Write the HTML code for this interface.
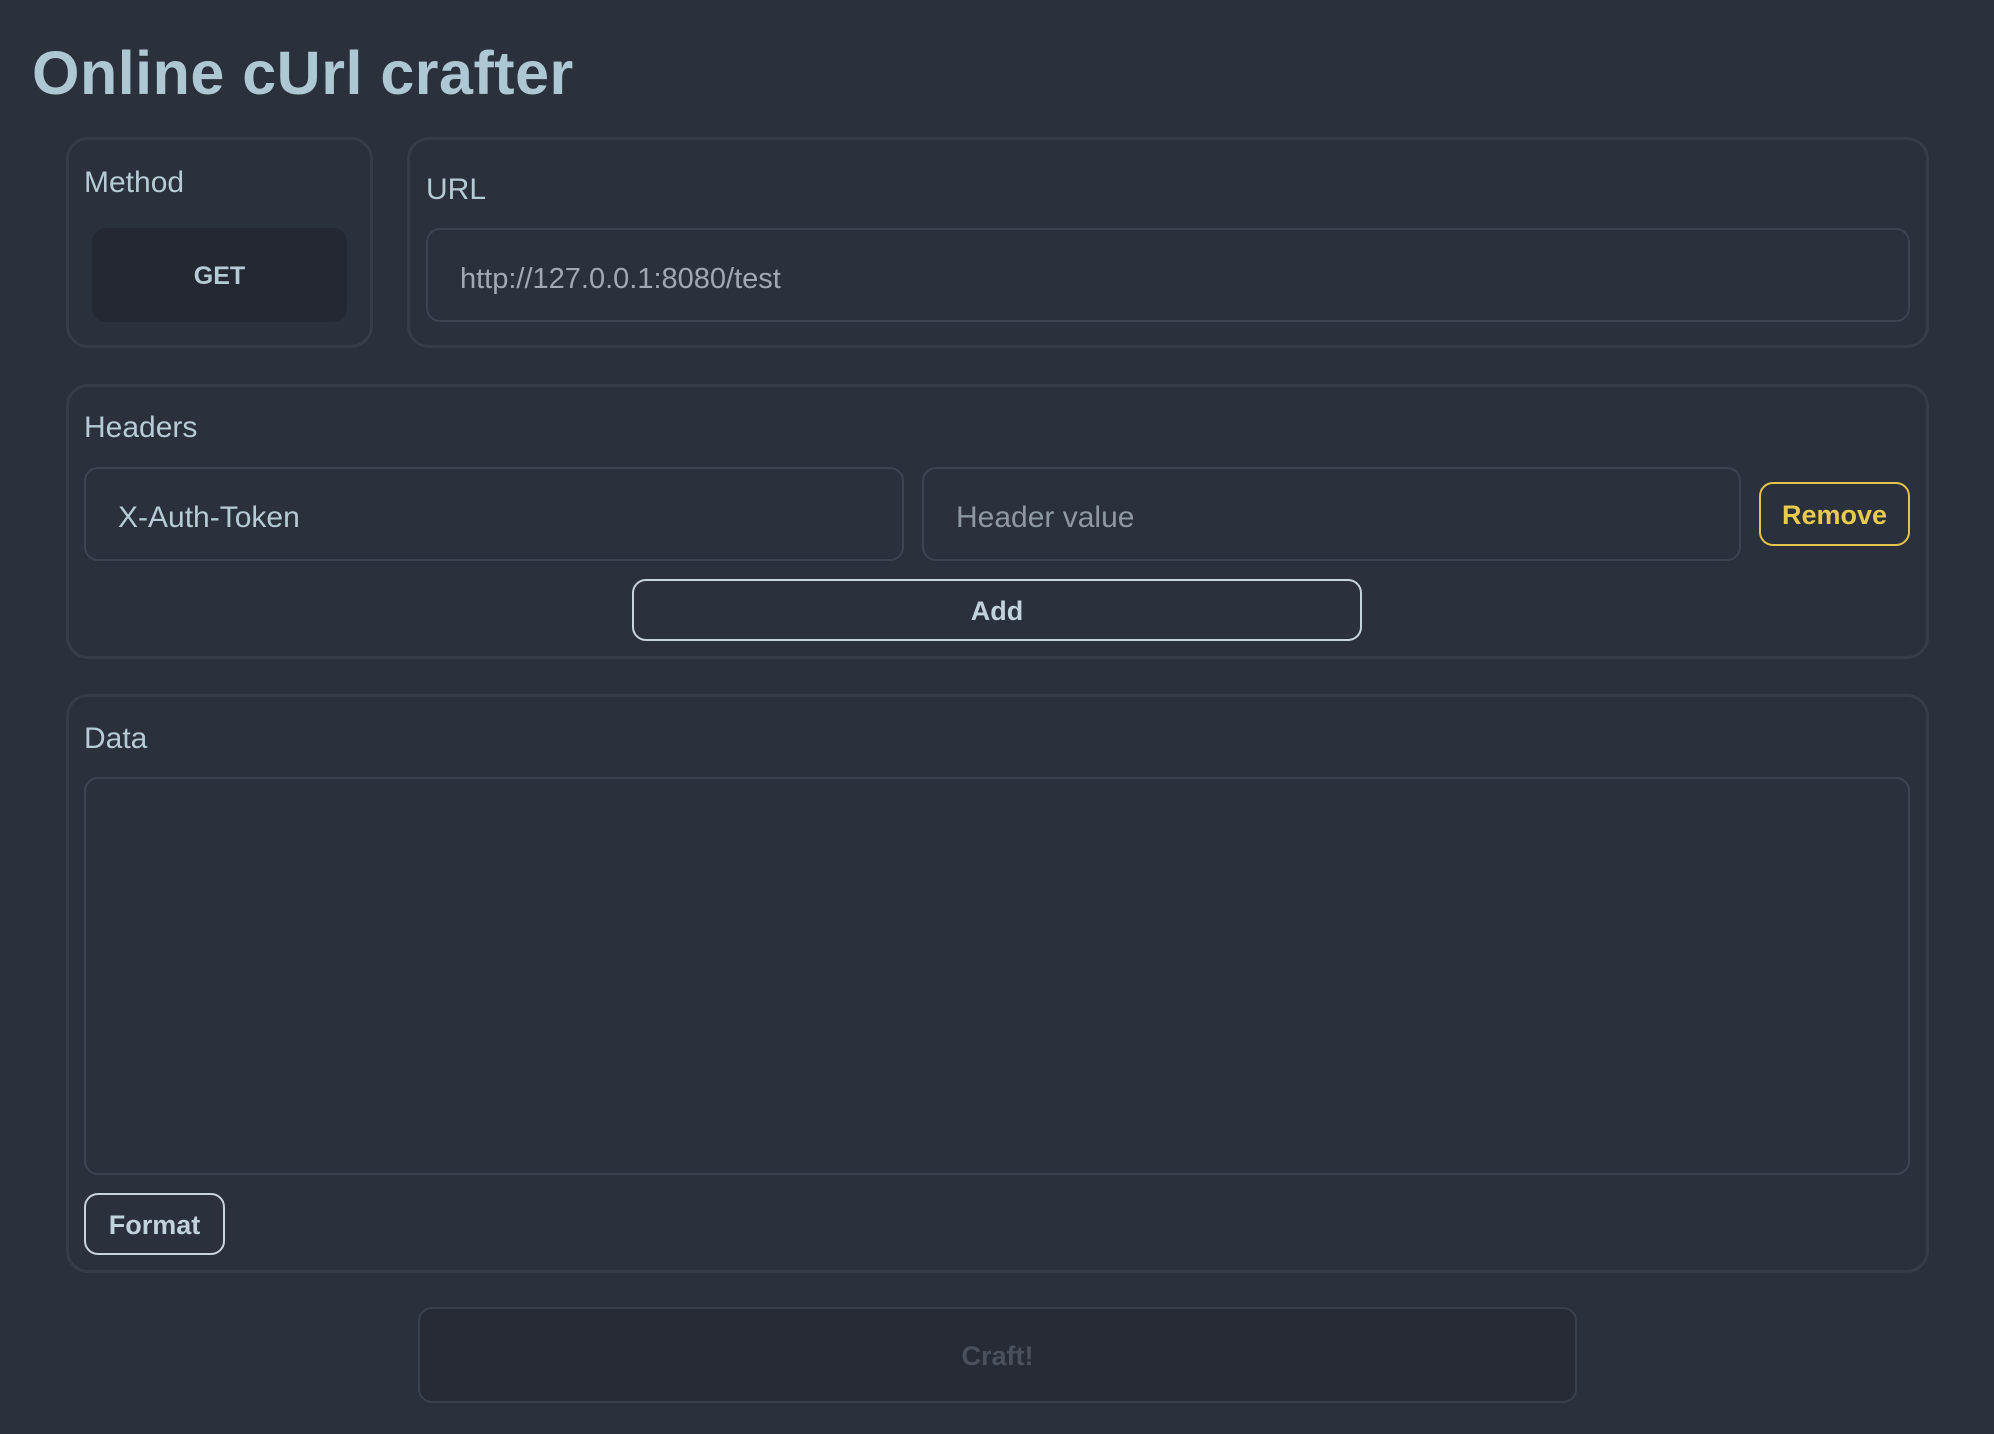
<!DOCTYPE html>
<html><head><meta charset="utf-8"><style>
*{box-sizing:border-box;margin:0;padding:0}
body{width:1994px;height:1434px;background:#2a303c;font-family:"Liberation Sans",sans-serif;position:relative;overflow:hidden;color:#b5ccd6}
h1{position:absolute;left:32px;top:38px;font-size:61px;font-weight:bold;color:#adc8d3;letter-spacing:0.5px}
.box{position:absolute;border:3px solid #363c48;border-radius:22px}
.lbl{position:absolute;font-size:30px;color:#b5ccd6}
.inp{position:absolute;border:2px solid #3d4350;border-radius:14px;font-size:30px;padding-left:32px;padding-top:8px;display:flex;align-items:center}
.btn{position:absolute;border-radius:14px;display:flex;align-items:center;justify-content:center;font-weight:bold;font-size:27px;padding-top:3px}
</style></head><body>
<h1>Online cUrl crafter</h1>
<div class="box" style="left:66px;top:137px;width:307px;height:211px"></div>
<div class="lbl" style="left:84px;top:166px">Method</div>
<div class="btn" style="left:92px;top:228px;width:255px;height:94px;background:#242832;color:#b5ccd6;font-size:25px">GET</div>
<div class="box" style="left:407px;top:137px;width:1522px;height:211px"></div>
<div class="lbl" style="left:426px;top:173px">URL</div>
<div class="inp" style="left:426px;top:228px;width:1484px;height:94px;color:#a0a9b3;font-size:29px">http://127.0.0.1:8080/test</div>
<div class="box" style="left:66px;top:384px;width:1863px;height:275px"></div>
<div class="lbl" style="left:84px;top:411px">Headers</div>
<div class="inp" style="left:84px;top:467px;width:820px;height:94px;color:#b5ccd6">X-Auth-Token</div>
<div class="inp" style="left:922px;top:467px;width:819px;height:94px;color:#8e98a3">Header value</div>
<div class="btn" style="left:1759px;top:482px;width:151px;height:64px;border:2px solid #e6c34a;color:#eac94f">Remove</div>
<div class="btn" style="left:632px;top:579px;width:730px;height:62px;border:2px solid #c8d4dc;color:#c0d2dc">Add</div>
<div class="box" style="left:66px;top:694px;width:1863px;height:579px"></div>
<div class="lbl" style="left:84px;top:722px">Data</div>
<div class="inp" style="left:84px;top:777px;width:1826px;height:398px"></div>
<div class="btn" style="left:84px;top:1193px;width:141px;height:62px;border:2px solid #c8d4dc;color:#c0d2dc">Format</div>
<div class="btn" style="left:418px;top:1307px;width:1159px;height:96px;border:2px solid #3a404c;background:#272b35;color:#4a505c">Craft!</div>
</body></html>
